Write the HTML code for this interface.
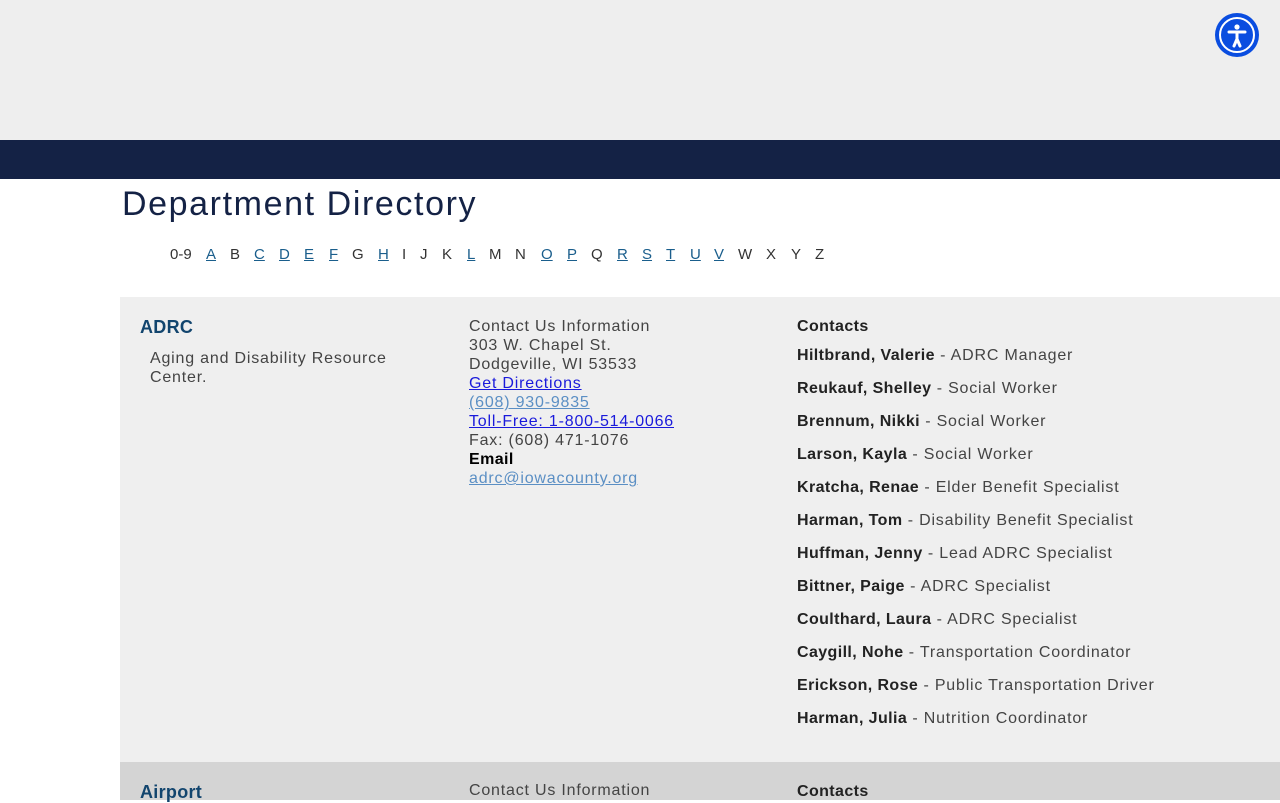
<!DOCTYPE html>
<html><head><meta charset="utf-8"><style>
*{margin:0;padding:0;box-sizing:border-box}
body{width:1280px;height:800px;overflow:hidden;background:#fff;font-family:"Liberation Sans",sans-serif;color:#333;position:relative}
.top{position:absolute;left:0;top:0;width:1280px;height:140px;background:#eeeeee}
.nav{position:absolute;left:0;top:140px;width:1280px;height:39px;background:#142245}
.acc{position:absolute;left:1215px;top:13px;width:44px;height:44px;border-radius:50%;background:#0a4de0}
.acc .ring{position:absolute;left:4px;top:4px;width:36px;height:36px;border-radius:50%;border:2px solid #fff}
h1{position:absolute;left:122px;top:185px;font-size:34px;font-weight:normal;color:#142245;letter-spacing:1.6px}
.az span{position:absolute;top:246px;font-size:15px;color:#333}
.az a{color:#1a5e8c;text-decoration:underline}
.row{position:absolute;left:120px;width:1160px}
.r1{top:297px;height:465px;background:#efefef}
.r2{top:762px;height:38px;background:#d4d4d4}
.t{position:absolute;font-size:16px;white-space:nowrap;letter-spacing:0.8px}
.dept{font-weight:bold;color:#12456e;font-size:18px;letter-spacing:0.3px}
.ci{line-height:19px}
.ci a{color:#1a1adb;text-decoration:underline}
.ci a.m{color:#5b8fc4}
.ct div{height:33px}
b{color:#222;letter-spacing:0.4px}
</style></head><body>
<div class="top"></div>
<div class="acc"><div class="ring"></div>
<svg style="position:absolute;left:0;top:0" width="44" height="44" viewBox="0 0 44 44"><circle cx="22" cy="14" r="2.6" fill="#fff"/><path d="M14 19 L30 19 M22 19 L22 26 M22 26 L19 33 M22 26 L25 33" stroke="#fff" stroke-width="3" stroke-linecap="round" fill="none"/></svg></div>
<div class="nav"></div>
<h1>Department Directory</h1>
<div class="az">
<span style="left:170px">0-9</span><span style="left:206px"><a>A</a></span><span style="left:230px">B</span><span style="left:254px"><a>C</a></span><span style="left:279px"><a>D</a></span><span style="left:304px"><a>E</a></span><span style="left:329px"><a>F</a></span><span style="left:352px">G</span><span style="left:378px"><a>H</a></span><span style="left:402px">I</span><span style="left:420px">J</span><span style="left:442px">K</span><span style="left:467px"><a>L</a></span><span style="left:489px">M</span><span style="left:515px">N</span><span style="left:541px"><a>O</a></span><span style="left:567px"><a>P</a></span><span style="left:591px">Q</span><span style="left:617px"><a>R</a></span><span style="left:642px"><a>S</a></span><span style="left:666px"><a>T</a></span><span style="left:690px"><a>U</a></span><span style="left:714px"><a>V</a></span><span style="left:738px">W</span><span style="left:766px">X</span><span style="left:791px">Y</span><span style="left:815px">Z</span>
</div>
<div class="row r1"></div>
<div class="row r2"></div>
<div class="t dept" style="left:140px;top:317px">ADRC</div>
<div class="t" style="left:150px;top:349px;line-height:19px;color:#444">Aging and Disability Resource<br>Center.</div>
<div class="t ci" style="left:469px;top:317px;color:#444">Contact Us Information<br>303 W. Chapel St.<br>Dodgeville, WI 53533<br><a>Get Directions</a><br><a class="m">(608) 930-9835</a><br><a>Toll-Free: 1-800-514-0066</a><br>Fax: (608) 471-1076<br><b style="color:#000">Email</b><br><a class="m">adrc@iowacounty.org</a></div>
<div class="t ct" style="left:797px;top:318px;color:#444">
<div style="height:29px"><b>Contacts</b></div>
<div><b>Hiltbrand, Valerie</b> - ADRC Manager</div>
<div><b>Reukauf, Shelley</b> - Social Worker</div>
<div><b>Brennum, Nikki</b> - Social Worker</div>
<div><b>Larson, Kayla</b> - Social Worker</div>
<div><b>Kratcha, Renae</b> - Elder Benefit Specialist</div>
<div><b>Harman, Tom</b> - Disability Benefit Specialist</div>
<div><b>Huffman, Jenny</b> - Lead ADRC Specialist</div>
<div><b>Bittner, Paige</b> - ADRC Specialist</div>
<div><b>Coulthard, Laura</b> - ADRC Specialist</div>
<div><b>Caygill, Nohe</b> - Transportation Coordinator</div>
<div><b>Erickson, Rose</b> - Public Transportation Driver</div>
<div><b>Harman, Julia</b> - Nutrition Coordinator</div>
</div>
<div class="t dept" style="left:140px;top:782px">Airport</div>
<div class="t" style="left:469px;top:782px;color:#444">Contact Us Information</div>
<div class="t" style="left:797px;top:783px"><b>Contacts</b></div>
</body></html>
